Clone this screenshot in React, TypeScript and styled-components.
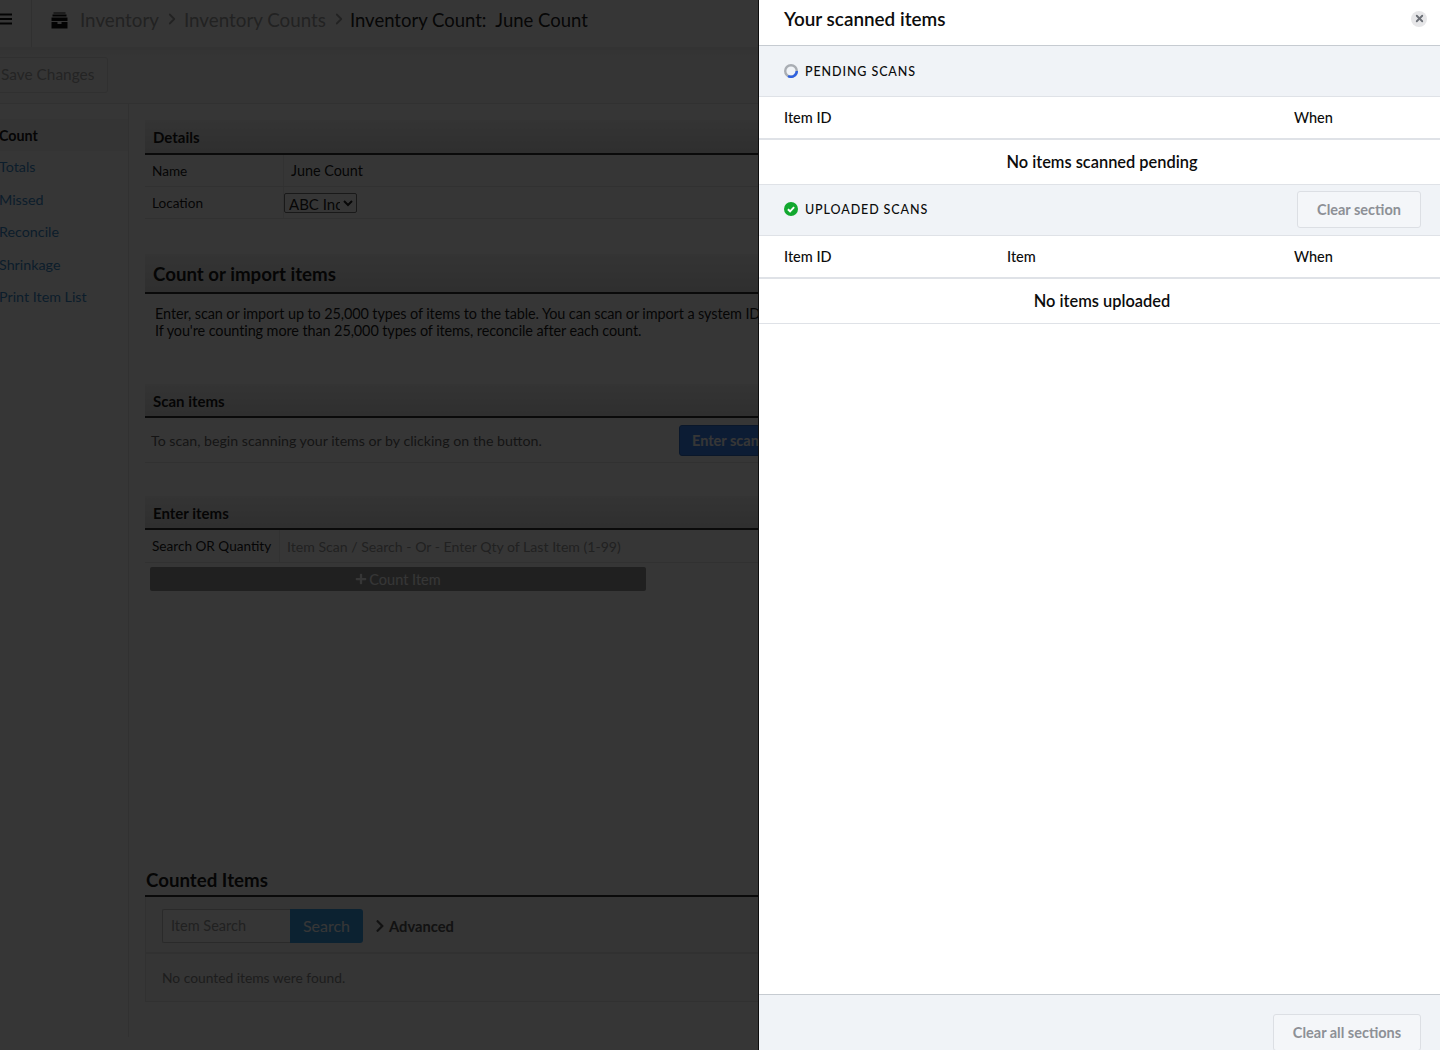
import React from "react";
import styled, { createGlobalStyle } from "styled-components";
import { ChevronRight, X } from "lucide-react";
import { FaChevronRight, FaPlus } from "react-icons/fa";

const GlobalStyle = createGlobalStyle`
  html, body {
    margin: 0;
    padding: 0;
    height: 100%;
    overflow: hidden;
    background: #ffffff;
    font-family: Lato, "Liberation Sans", sans-serif;
    color: #0a0a0a;
  }
  * { box-sizing: border-box; }
`;

/* ---- page behind the overlay ---- */

const Page = styled.div`
  width: 1440px;
  height: 1050px;
  display: flex;
  flex-direction: column;
  overflow: hidden;
`;

const TopBar = styled.header`
  height: 47px;
  flex: none;
  display: flex;
  align-items: flex-start;
  background: #fff;
`;

const MenuCell = styled.div`
  width: 32px;
  height: 47px;
  flex: none;
  border-right: 1px solid #e4e4e4;
  display: flex;
  align-items: flex-start;
  padding-top: 13px;
`;

const Crumbs = styled.nav`
  display: flex;
  align-items: center;
  padding-left: 19px;
  font-size: 18.8px;
  line-height: 40px;
`;

const Crumb = styled.span<{ $current?: boolean }>`
  color: ${(p) => (p.$current ? "#222" : "#a0a0a0")};
  font-size: ${(p) => (p.$current ? "18.5px" : "18.8px")};
  margin-left: ${(p) => (p.$current ? "-1px" : "0")};
`;

const CrumbIcon = styled.svg`
  width: 17px;
  height: 17px;
  margin-right: 12px;
`;

const CrumbSep = styled(ChevronRight)`
  width: 18px;
  height: 18px;
  margin: 0 3px 0 4px;
  color: #a0a0a0;
  stroke-width: 2.4;
  position: relative;
  top: -1px;
`;

const Toolbar = styled.div`
  height: 57px;
  flex: none;
  padding-top: 10px;
  background: linear-gradient(#f0f0f0, #fafafa 20%, #fafafa);
  border-bottom: 1px solid #e8e8e8;
`;

const SaveButton = styled.button`
  display: block;
  width: 108px;
  height: 36px;
  padding: 0 0 2px 1px;
  text-align: left;
  font: 15.4px Lato, sans-serif;
  color: #a8a8a8;
  background: #fafafa;
  border: 1px solid #e2e2e2;
  border-left: 0;
  border-radius: 0 3px 3px 0;
`;

const Body = styled.div`
  flex: 1;
  display: flex;
  min-height: 0;
`;

const Sidebar = styled.aside`
  width: 129px;
  height: 933px;
  flex: none;
  padding-top: 15px;
  border-right: 1px solid #e8e8e8;
`;

const SideItem = styled.div<{ $active?: boolean }>`
  height: 32.4px;
  line-height: ${(p) => (p.$active ? "34px" : "32px")};
  font-size: 14.3px;
  white-space: nowrap;
  margin-left: -1px;
  color: ${(p) => (p.$active ? "#1a1a1a" : "#3b8ac9")};
  font-weight: ${(p) => (p.$active ? 700 : 400)};
  background: ${(p) => (p.$active ? "#f4f4f4" : "transparent")};
`;

const Main = styled.main`
  width: 660px;
  flex: none;
  padding: 16px 0 0 16px;
`;

const Band = styled.h3<{ $large?: boolean; $height?: number }>`
  margin: 0;
  height: ${(p) => (p.$large ? 40 : p.$height ?? 35)}px;
  line-height: ${(p) => (p.$large ? "41px" : "34px")};
  padding-left: 8px;
  font-size: ${(p) => (p.$large ? "18.7px" : "15px")};
  font-weight: 700;
  color: #1a1a1a;
  background: linear-gradient(#f4f4f4, #dcdcdc);
  border-bottom: 2px solid #333;
`;

const FormRow = styled.div<{ $labelWidth?: number; $height?: number }>`
  display: grid;
  grid-template-columns: ${(p) => p.$labelWidth ?? 138}px 1fr;
  height: ${(p) => p.$height ?? 32}px;
  align-items: stretch;
  font-size: 13.6px;
  border-bottom: 1px solid #e8e8e8;
`;

const RowLabel = styled.div`
  display: flex;
  align-items: center;
  padding-left: 7px;
  color: #1a1a1a;
  white-space: nowrap;
`;

const RowValue = styled.div<{ $muted?: boolean }>`
  display: flex;
  align-items: center;
  padding-left: 7px;
  font-size: ${(p) => (p.$muted ? "14.1px" : "14.4px")};
  color: ${(p) => (p.$muted ? "#9a9a9a" : "#1a1a1a")};
  border-left: 1px solid #eaeaea;
  white-space: nowrap;
`;

const LocationSelect = styled.select`
  width: 73px;
  height: 20px;
  margin-left: -7px;
  padding: 0;
  font: 15px Lato, sans-serif;
  color: #222;
  background: #fff;
  border: 1px solid #777;
  border-radius: 2px;
`;

const Section = styled.section<{ $gap: number }>`
  margin-top: ${(p) => p.$gap}px;
`;

const Intro = styled.p`
  margin: 11px 0 0 10px;
  font-size: 14.45px;
  line-height: 17px;
  letter-spacing: -0.1px;
  white-space: nowrap;
  color: #1a1a1a;
`;

const ScanRow = styled.div`
  height: 45px;
  width: 674px;
  display: flex;
  align-items: center;
  justify-content: space-between;
  padding-left: 6px;
  font-size: 14.2px;
  color: #666;
  border-bottom: 1px solid #e8e8e8;
`;

const ScanButton = styled.button`
  width: 140px;
  height: 31px;
  padding: 0 0 0 12px;
  text-align: left;
  font: 700 14.5px Lato, sans-serif;
  color: #ffffff;
  background: #3a86f5;
  border: 1px solid #2f6cc8;
  border-radius: 3px;
  white-space: nowrap;
`;

const CountButton = styled.button`
  display: flex;
  align-items: center;
  justify-content: center;
  gap: 2px;
  width: 496px;
  height: 24px;
  margin: 4px 0 0 5px;
  font: 14.5px Lato, sans-serif;
  color: #fff;
  background: #979797;
  border: 0;
  border-radius: 2px;
  & svg { width: 12px; height: 12px; }
`;

const CountedHeading = styled.h2`
  margin: 0;
  height: 32px;
  line-height: 30px;
  padding-left: 1px;
  font-size: 18.7px;
  font-weight: 700;
  color: #1a1a1a;
  border-bottom: 2px solid #333;
`;

const SearchPanel = styled.div`
  height: 56px;
  width: 760px;
  display: flex;
  align-items: center;
  padding: 2px 0 0 16px;
  border: 1px solid #e8e8e8;
  border-top: 0;
  background: #f8f8f8;
`;

const SearchInput = styled.div`
  width: 128px;
  height: 34px;
  line-height: 32px;
  padding-left: 8px;
  font-size: 14.5px;
  color: #9a9a9a;
  background: #fff;
  border: 1px solid #c8c8c8;
  border-right: 0;
  border-radius: 2px 0 0 2px;
`;

const SearchButton = styled.button`
  width: 73px;
  height: 34px;
  font: 16px Lato, sans-serif;
  color: #fff;
  background: #3a9fe8;
  border: 0;
  border-radius: 0 3px 3px 0;
`;

const Advanced = styled.div`
  display: flex;
  align-items: center;
  gap: 4px;
  margin-left: 12px;
  font-size: 14.7px;
  font-weight: 700;
  color: #555;
  & svg { width: 10px; height: 14px; }
`;

const EmptyPanel = styled.div`
  height: 49px;
  width: 760px;
  display: flex;
  align-items: center;
  padding-left: 16px;
  font-size: 13.8px;
  color: #888;
  background: #fafafa;
  border: 1px solid #e8e8e8;
`;

/* ---- scrim and drawer, lying over the page ---- */

const Scrim = styled.div`
  position: fixed;
  inset: 0;
  background: rgba(0, 0, 0, 0.79);
`;

const Drawer = styled.aside`
  position: fixed;
  top: 0;
  bottom: 0;
  right: 0;
  width: 682px;
  display: flex;
  flex-direction: column;
  background: #fff;
  border-left: 1px solid #0d0d0d;
  color: #0c0c0c;
`;

const DrawerHead = styled.div`
  height: 46px;
  flex: none;
  display: flex;
  align-items: center;
  justify-content: space-between;
  padding: 0 13px 8px 25px;
  border-bottom: 1px solid #c6cbd1;
`;

const DrawerTitle = styled.h1`
  margin: 0;
  font-size: 18.9px;
  font-weight: 600;
`;

const CloseButton = styled.button`
  width: 16px;
  height: 16px;
  display: flex;
  align-items: center;
  justify-content: center;
  padding: 0;
  border: 0;
  border-radius: 50%;
  background: #e6e6e8;
  color: #6b6f76;
  & svg { width: 11px; height: 11px; stroke-width: 4; }
`;

const SectionBar = styled.div<{ $lift?: number }>`
  height: 51px;
  flex: none;
  display: flex;
  align-items: center;
  padding: 0 19px ${(p) => p.$lift ?? 0}px 25px;
  background: #f0f3f7;
  border-bottom: 1px solid #dfe2e7;
`;

const SectionName = styled.span`
  margin-left: 7px;
  font-size: 12.5px;
  font-weight: 500;
  letter-spacing: 0.9px;
  text-transform: uppercase;
`;

const StatusIcon = styled.svg`
  width: 14px;
  height: 14px;
  flex: none;
`;

const GhostButton = styled.button<{ $width: number; $height: number }>`
  width: ${(p) => p.$width}px;
  height: ${(p) => p.$height}px;
  flex: none;
  font: 700 14.5px Lato, sans-serif;
  color: #8d9096;
  background: #f4f6f9;
  border: 1px solid #dcdfe4;
  border-radius: 3px;
`;

const ColumnRow = styled.div`
  height: 43px;
  flex: none;
  display: grid;
  grid-template-columns: 223px 287px 1fr;
  align-items: center;
  padding-left: 25px;
  font-size: 14.5px;
  font-weight: 500;
  border-bottom: 2px solid #dfe2e7;
`;

const EmptyRow = styled.div<{ $height: number }>`
  height: ${(p) => p.$height}px;
  flex: none;
  display: flex;
  align-items: center;
  justify-content: center;
  padding: 0 0 1px 5px;
  font-size: 16.4px;
  font-weight: 600;
  border-bottom: 1px solid #dfe2e7;
`;

const Spacer = styled.div`
  flex: 1;
`;

const DrawerFoot = styled.div`
  height: 56px;
  flex: none;
  display: flex;
  justify-content: flex-end;
  padding: 19px 19px 0 0;
  background: #f0f3f7;
  border-top: 1px solid #c6cbd1;
  overflow: hidden;
`;

const sideItems = ["Totals", "Missed", "Reconcile", "Shrinkage", "Print Item List"];

const App: React.FC = () => {
  return (
    <>
      <GlobalStyle />
      <Page>
        <TopBar>
          <MenuCell>
            <svg width="13" height="13" viewBox="0 0 13 13" fill="#111">
              <rect x="0" y="0.5" width="12" height="2" />
              <rect x="0" y="5" width="12" height="2" />
              <rect x="0" y="9.5" width="12" height="2" />
            </svg>
          </MenuCell>
          <Crumbs>
            <CrumbIcon viewBox="0 0 17 17" fill="#111">
              <rect x="2.5" y="0.5" width="12" height="1" />
              <rect x="1.5" y="2.5" width="14" height="2" />
              <path d="M0.5 5.5h16v3.5h-16z" />
              <path d="M0.5 10h6v2h4v-2h6v6.5h-16z" />
            </CrumbIcon>
            <Crumb>Inventory</Crumb>
            <CrumbSep />
            <Crumb>Inventory Counts</Crumb>
            <CrumbSep />
            <Crumb $current>Inventory Count:&nbsp; June Count</Crumb>
          </Crumbs>
        </TopBar>

        <Toolbar>
          <SaveButton>Save Changes</SaveButton>
        </Toolbar>

        <Body>
          <Sidebar>
            <SideItem $active>Count</SideItem>
            {sideItems.map((item) => (
              <SideItem key={item}>{item}</SideItem>
            ))}
          </Sidebar>

          <Main>
            <Band>Details</Band>
            <FormRow>
              <RowLabel>Name</RowLabel>
              <RowValue>June Count</RowValue>
            </FormRow>
            <FormRow>
              <RowLabel>Location</RowLabel>
              <RowValue>
                <LocationSelect defaultValue="ABC Inc">
                  <option>ABC Inc</option>
                </LocationSelect>
              </RowValue>
            </FormRow>

            <Section $gap={35}>
              <Band $large>Count or import items</Band>
              <Intro>
                Enter, scan or import up to 25,000 types of items to the table. You can scan or import a system ID
                <br />
                If you're counting more than 25,000 types of items, reconcile after each count.
              </Intro>
            </Section>

            <Section $gap={45}>
              <Band $height={34}>Scan items</Band>
              <ScanRow>
                To scan, begin scanning your items or by clicking on the button.
                <ScanButton>Enter scans</ScanButton>
              </ScanRow>
            </Section>

            <Section $gap={33}>
              <Band $height={34}>Enter items</Band>
              <FormRow $labelWidth={134} $height={33}>
                <RowLabel>Search OR Quantity</RowLabel>
                <RowValue $muted>Item Scan / Search - Or - Enter Qty of Last Item (1-99)</RowValue>
              </FormRow>
              <CountButton>
                <FaPlus />
                Count Item
              </CountButton>
            </Section>

            <Section $gap={274}>
              <CountedHeading>Counted Items</CountedHeading>
              <SearchPanel>
                <SearchInput>Item Search</SearchInput>
                <SearchButton>Search</SearchButton>
                <Advanced>
                  <FaChevronRight />
                  Advanced
                </Advanced>
              </SearchPanel>
              <EmptyPanel>No counted items were found.</EmptyPanel>
            </Section>
          </Main>
        </Body>
      </Page>

      <Scrim />

      <Drawer>
        <DrawerHead>
          <DrawerTitle>Your scanned items</DrawerTitle>
          <CloseButton aria-label="Close">
            <X />
          </CloseButton>
        </DrawerHead>

        <SectionBar>
          <StatusIcon viewBox="0 0 14 14" fill="none">
            <circle cx="7" cy="7" r="5.8" stroke="#a9adb3" strokeWidth="2.4" />
            <path d="M12.8 7a5.8 5.8 0 0 1-8.7 5" stroke="#2f62e0" strokeWidth="2.4" />
          </StatusIcon>
          <SectionName>Pending scans</SectionName>
        </SectionBar>
        <ColumnRow>
          <span>Item ID</span>
          <span />
          <span>When</span>
        </ColumnRow>
        <EmptyRow $height={45}>No items scanned pending</EmptyRow>

        <SectionBar $lift={2}>
          <StatusIcon viewBox="0 0 14 14">
            <circle cx="7" cy="7" r="7" fill="#12a82f" />
            <path d="M3.9 7.2l2.2 2.1 4-4.2" fill="none" stroke="#fff" strokeWidth="1.9" />
          </StatusIcon>
          <SectionName>Uploaded scans</SectionName>
          <Spacer />
          <GhostButton $width={124} $height={37}>
            Clear section
          </GhostButton>
        </SectionBar>
        <ColumnRow>
          <span>Item ID</span>
          <span>Item</span>
          <span>When</span>
        </ColumnRow>
        <EmptyRow $height={45}>No items uploaded</EmptyRow>

        <Spacer />

        <DrawerFoot>
          <GhostButton $width={148} $height={37}>
            Clear all sections
          </GhostButton>
        </DrawerFoot>
      </Drawer>
    </>
  );
};

export default App;
